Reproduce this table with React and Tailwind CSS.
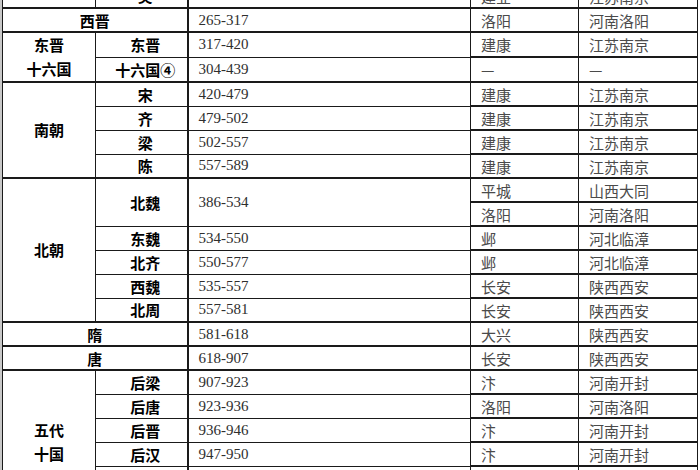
const rows = [
  { a: { text: "", span: 1 }, b: "吴", y: "222-280", c: "建业", p: "江苏南京" },
  { ab: "西晋", y: "265-317", c: "洛阳", p: "河南洛阳", major: true },
  { a: { text: ["东晋", "十六国"], span: 2 }, b: "东晋", y: "317-420", c: "建康", p: "江苏南京", major: true },
  { b: "十六国④", y: "304-439", c: "—", p: "—" },
  { a: { text: ["南朝"], span: 4 }, b: "宋", y: "420-479", c: "建康", p: "江苏南京", major: true },
  { b: "齐", y: "479-502", c: "建康", p: "江苏南京" },
  { b: "梁", y: "502-557", c: "建康", p: "江苏南京" },
  { b: "陈", y: "557-589", c: "建康", p: "江苏南京" },
  { a: { text: ["北朝"], span: 6 }, b: "北魏", bSpan: 2, y: "386-534", c: "平城", p: "山西大同", major: true },
  { skipB: true, c: "洛阳", p: "河南洛阳" },
  { b: "东魏", y: "534-550", c: "邺", p: "河北临漳" },
  { b: "北齐", y: "550-577", c: "邺", p: "河北临漳" },
  { b: "西魏", y: "535-557", c: "长安", p: "陕西西安" },
  { b: "北周", y: "557-581", c: "长安", p: "陕西西安" },
  { ab: "隋", y: "581-618", c: "大兴", p: "陕西西安", major: true },
  { ab: "唐", y: "618-907", c: "长安", p: "陕西西安", major: true },
  { a: { text: ["五代", "十国"], span: 6 }, b: "后梁", y: "907-923", c: "汴", p: "河南开封", major: true },
  { b: "后唐", y: "923-936", c: "洛阳", p: "河南洛阳" },
  { b: "后晋", y: "936-946", c: "汴", p: "河南开封" },
  { b: "后汉", y: "947-950", c: "汴", p: "河南开封" },
  { b: "后周", y: "951-960", c: "汴", p: "河南开封" },
  { b: "十国", y: "902-979", c: "—", p: "—" },
];

const bold = "font-bold text-black text-[15px] text-center";
const song = "text-[#4a4a4a] text-[15px] pl-[10px]";

export default function App() {
  return (
    <div
      className="w-[700px] h-[470px] overflow-hidden bg-white flex"
      style={{ fontFamily: '"Noto Sans CJK SC", "Noto Sans", sans-serif' }}
    >
      <div className="w-[2px] shrink-0 bg-[#c8c8c8]" />
      <div className="shrink-0">
        <table className="table-fixed border-collapse w-[695px] mt-[-17px] border-l border-[#555]">
          <colgroup>
            <col className="w-[93px]" />
            <col className="w-[92px]" />
            <col className="w-[283px]" />
            <col className="w-[108px]" />
            <col className="w-[119px]" />
          </colgroup>
          <tbody>
            {rows.map((r, i) => {
              const t = r.major ? "border-t-2" : "";
              return (
                <tr key={i} className="h-[24px]">
                  {r.ab ? (
                    <td colSpan={2} className={`border border-[#1a1a1a] ${t} ${bold} leading-[21px]`}>
                      {r.ab}
                    </td>
                  ) : (
                    <>
                      {r.a && (
                        <td
                          rowSpan={r.a.span}
                          className={`border border-[#1a1a1a] ${t} ${bold} leading-[24px] align-middle`}
                        >
                          {Array.isArray(r.a.text)
                            ? r.a.text.map((s) => <div key={s}>{s}</div>)
                            : r.a.text}
                        </td>
                      )}
                      {!r.skipB && (
                        <td
                          rowSpan={r.bSpan || 1}
                          className={`border border-[#1a1a1a] ${t} ${bold} pl-2 leading-[21px]`}
                        >
                          {r.b}
                        </td>
                      )}
                    </>
                  )}
                  {!r.skipB && (
                    <td
                      rowSpan={r.bSpan || 1}
                      className={`border border-[#1a1a1a] border-l-2 ${t} pl-[10px] text-[15px] text-[#2e2e2e] leading-[21px]`}
                      style={{ fontFamily: '"Liberation Serif", serif' }}
                    >
                      {r.y}
                    </td>
                  )}
                  <td className={`border border-[#1a1a1a] border-t-2 ${song} leading-[21px]`}>{r.c}</td>
                  <td className={`border border-[#1a1a1a] border-t-2 ${song} leading-[21px]`}>{r.p}</td>
                </tr>
              );
            })}
          </tbody>
        </table>
      </div>
    </div>
  );
}
